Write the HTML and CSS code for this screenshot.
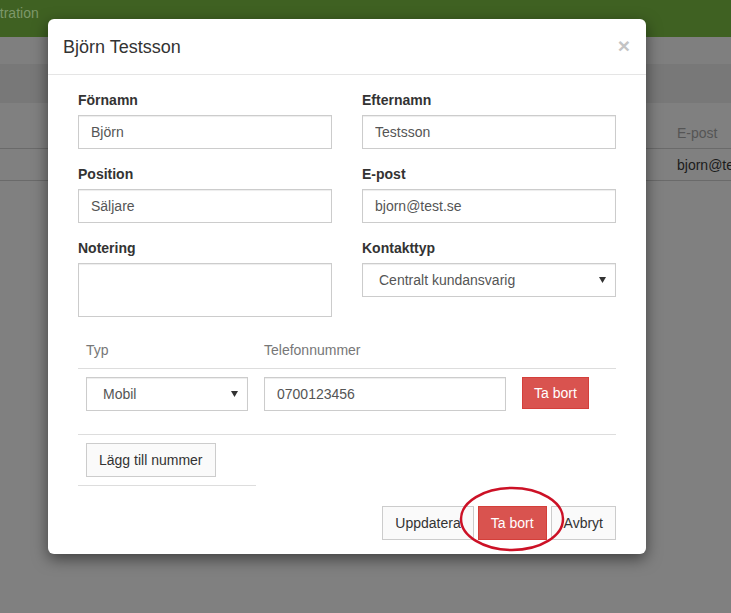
FILE: index.html
```html
<!DOCTYPE html>
<html lang="sv">
<head>
<meta charset="utf-8">
<title>Björn Testsson</title>
<link rel="stylesheet" href="styles.css">
</head>
<body>
<div class="page">
  <header class="topbar"><span class="brand">Administration</span></header>
  <div class="subbar"></div>
  <div class="band"></div>
  <div class="bg-table">
    <div class="bg-head"><span class="bg-cell muted">E-post</span></div>
    <div class="bg-row"><span class="bg-cell">bjorn@test.se</span></div>
  </div>
</div>

<div class="modal">
  <div class="modal-header">
    <h4 class="modal-title">Björn Testsson</h4>
    <span class="close">×</span>
  </div>
  <div class="modal-body">
    <div class="form-grid">
      <div class="form-group">
        <label class="lbl">Förnamn</label>
        <input class="control" type="text" value="Björn">
      </div>
      <div class="form-group">
        <label class="lbl">Efternamn</label>
        <input class="control" type="text" value="Testsson">
      </div>
      <div class="form-group">
        <label class="lbl">Position</label>
        <input class="control" type="text" value="Säljare">
      </div>
      <div class="form-group">
        <label class="lbl">E-post</label>
        <input class="control" type="text" value="bjorn@test.se">
      </div>
      <div class="form-group">
        <label class="lbl">Notering</label>
        <textarea class="control textarea"></textarea>
      </div>
      <div class="form-group">
        <label class="lbl">Kontakttyp</label>
        <div class="control select"><span>Centralt kundansvarig</span><svg class="caret" width="7" height="6" viewBox="0 0 7 6"><path d="M0 0H7L3.5 6Z" fill="#333"/></svg></div>
      </div>
    </div>

    <table class="phones">
      <colgroup><col class="c1"><col class="c2"><col></colgroup>
      <thead>
        <tr><th>Typ</th><th>Telefonnummer</th><th></th></tr>
      </thead>
      <tbody>
        <tr>
          <td><div class="cell-group"><div class="control select"><span>Mobil</span><svg class="caret" width="7" height="6" viewBox="0 0 7 6"><path d="M0 0H7L3.5 6Z" fill="#333"/></svg></div></div></td>
          <td><div class="cell-group"><input class="control" type="text" value="0700123456"></div></td>
          <td><button class="btn btn-danger btn-row">Ta bort</button></td>
        </tr>
      </tbody>
    </table>

    <table class="add-table">
      <tr><td><button class="btn btn-default">Lägg till nummer</button></td></tr>
    </table>
  </div>
  <div class="modal-footer">
    <button class="btn btn-default">Uppdatera</button>
    <button class="btn btn-danger">Ta bort</button>
    <button class="btn btn-default">Avbryt</button>
  </div>
  <svg class="mark" width="106" height="66" viewBox="0 0 106 66"><ellipse cx="53" cy="33" rx="51" ry="31" fill="none" stroke="#cc1126" stroke-width="2.5"/></svg>
</div>
</body>
</html>
```

FILE: styles.css
```css
* { box-sizing: border-box; }
html, body { margin: 0; padding: 0; }
body {
  font-family: "Liberation Sans", Arial, sans-serif;
  font-size: 14px;
  line-height: 20px;
  color: #333;
  background: #808080;
  width: 731px;
  height: 613px;
  overflow: hidden;
  position: relative;
}
.page { width: 731px; }
.topbar {
  height: 37px;
  background: #3f6122;
  padding-top: 3px;
}
.brand {
  display: block;
  margin-left: -50px;
  color: #7d9869;
  font-size: 14px;
  line-height: 20px;
}
.subbar { height: 27px; background: #7f7f7f; }
.band { height: 39px; background: #787878; }
.bg-table { display: flex; flex-direction: column; }
.bg-head {
  height: 46px;
  border-bottom: 1px solid #6a6a6a;
  display: flex;
  align-items: flex-end;
  padding-bottom: 5px;
}
.bg-row {
  height: 32px;
  border-bottom: 1px solid #6a6a6a;
  display: flex;
  align-items: center;
}
.bg-cell { margin-left: 677px; white-space: nowrap; color: #1b1b1b; }
.bg-cell.muted { color: #555; }

.modal {
  position: absolute;
  left: 48px;
  top: 19px;
  width: 598px;
  background: #fff;
  border-radius: 6px;
  box-shadow: 0 5px 15px rgba(0, 0, 0, 0.5);
}
.modal-header {
  display: flex;
  justify-content: space-between;
  align-items: flex-start;
  padding: 15px 15px 14px 15px;
  border-bottom: 1px solid #e5e5e5;
}
.modal-title {
  margin: 0;
  font-size: 18px;
  font-weight: normal;
  line-height: 26px;
  color: #333;
}
.close {
  font-size: 21px;
  font-weight: bold;
  line-height: 20px;
  color: #c4c4c4;
  margin-top: 2px;
  margin-right: 1px;
}
.modal-body { padding: 15px 30px 0 30px; }
.form-grid {
  display: grid;
  grid-template-columns: 254px 254px;
  column-gap: 30px;
}
.form-group { margin-bottom: 15px; }
.lbl {
  display: block;
  font-weight: bold;
  margin-bottom: 5px;
  line-height: 20px;
  color: #333;
}
.control {
  display: block;
  width: 100%;
  height: 34px;
  padding: 6px 12px;
  font-family: "Liberation Sans", Arial, sans-serif;
  font-size: 14px;
  line-height: 20px;
  color: #555;
  background: #fff;
  border: 1px solid #ccc;
  border-radius: 0;
  box-shadow: inset 0 1px 1px rgba(0, 0, 0, 0.075);
  margin: 0;
  outline: none;
}
.textarea { height: 54px; resize: none; }
.select {
  display: flex;
  align-items: center;
  justify-content: space-between;
  padding: 6px 9px 6px 16px;
}
.caret { display: block; }

.phones {
  width: 538px;
  border-collapse: collapse;
  table-layout: fixed;
}
.phones .c1 { width: 178px; }
.phones .c2 { width: 258px; }
.phones th {
  text-align: left;
  font-weight: normal;
  color: #777;
  padding: 8px;
  line-height: 20px;
  border-bottom: 1px solid #ddd;
}
.phones td {
  padding: 8px;
  vertical-align: top;
  border-bottom: 1px solid #ddd;
}
.cell-group { margin-bottom: 15px; }

.add-table {
  width: 178px;
  border-collapse: collapse;
}
.add-table td {
  padding: 8px;
  border-bottom: 1px solid #ddd;
}

.btn {
  display: inline-block;
  font-family: "Liberation Sans", Arial, sans-serif;
  font-size: 14px;
  line-height: 20px;
  padding: 6px 12px;
  border: 1px solid #ccc;
  border-radius: 0;
  background: #fafafa;
  color: #333;
  white-space: nowrap;
  margin: 0;
}
.btn-danger {
  background: #d9534f;
  border-color: #d43f3a;
  color: #fff;
}
.btn-row { padding: 5px 11px; }

.modal-footer {
  display: flex;
  justify-content: flex-end;
  gap: 4px;
  padding: 20px 30px 14px 30px;
}
.mark {
  position: absolute;
  left: 411px;
  top: 467px;
}
```
